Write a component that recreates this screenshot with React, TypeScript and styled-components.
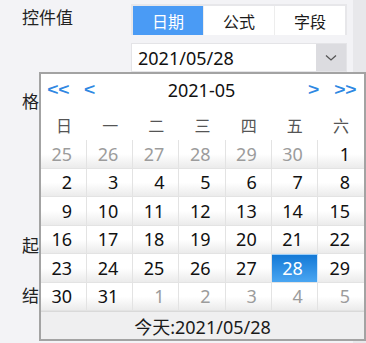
import React from "react";
import styled, { createGlobalStyle } from "styled-components";

const GlobalStyle = createGlobalStyle`
  html, body {
    margin: 0;
    padding: 0;
    background: #f3f3f6;
    font-family: "Noto Sans", "Noto Sans CJK SC", sans-serif;
  }
`;

const Page = styled.div`
  position: relative;
  display: flex;
  width: 366px;
  height: 343px;
  overflow: hidden;
`;

const Form = styled.div`
  flex: 1;
  display: flex;
  flex-direction: column;
  padding: 4px 6px 0 22px;
`;

const ScrollTrack = styled.div`
  width: 13px;
  background: #e8e8eb;
`;

const FieldRow = styled.div<{ $top?: number; $height: number }>`
  display: flex;
  align-items: center;
  margin-top: ${(p) => p.$top ?? 0}px;
  height: ${(p) => p.$height}px;
`;

const Label = styled.div`
  width: 109px;
  font-size: 17px;
  color: #222;
  align-self: flex-start;
  line-height: 22px;
  padding-top: 3px;
`;

const Segmented = styled.div`
  display: flex;
  width: 216px;
  height: 31px;
  box-sizing: border-box;
  border: 2px solid #e7e7ea;
  border-bottom: none;
  background: #fff;
`;

const SegButton = styled.div<{ $active?: boolean }>`
  flex: 1;
  display: flex;
  align-items: center;
  justify-content: center;
  font-size: 16px;
  color: ${(p) => (p.$active ? "#fff" : "#1a1a1a")};
  background: ${(p) => (p.$active ? "#4a9bf5" : "#fff")};
  & + & {
    border-left: 1px solid #ededed;
  }
`;

const DateInput = styled.div`
  display: flex;
  width: 216px;
  height: 29px;
  box-sizing: border-box;
  border: 1px solid #e4e4e7;
  background: #fff;
`;

const DateText = styled.div`
  flex: 1;
  display: flex;
  align-items: center;
  padding-left: 6px;
  font-size: 18px;
  color: #111;
`;

const DropButton = styled.div`
  width: 30px;
  display: flex;
  align-items: center;
  justify-content: center;
  background: #dcdce0;
`;

const Popup = styled.div`
  position: absolute;
  left: 39px;
  top: 72px;
  width: 327px;
  height: 269px;
  box-sizing: border-box;
  border: 2px solid #a3a3a3;
  background: #fff;
  display: flex;
  flex-direction: column;
`;

const Header = styled.div`
  display: flex;
  align-items: center;
  height: 32px;
  padding: 0 9px 0 8px;
`;

const NavBtn = styled.div<{ $gap?: number }>`
  color: #2f88e2;
  font-family: "Liberation Sans", sans-serif;
  font-weight: bold;
  font-size: 16px;
  letter-spacing: 0px;
  margin-left: ${(p) => p.$gap ?? 0}px;
  transform: scaleX(1.2);
`;

const Title = styled.div`
  flex: 1;
  text-align: center;
  font-size: 18px;
  color: #111;
`;

const WeekRow = styled.div`
  display: grid;
  grid-template-columns: repeat(7, 1fr);
  height: 34px;
  align-items: center;
`;

const WeekDay = styled.div`
  text-align: center;
  font-family: "Noto Sans CJK SC", sans-serif;
  font-size: 16px;
  color: #555;
  padding-top: 4px;
`;

const Grid = styled.div`
  display: grid;
  grid-template-columns: repeat(7, 1fr);
  grid-auto-rows: 28.5px;
`;

const Cell = styled.div<{ $muted?: boolean; $selected?: boolean }>`
  display: flex;
  align-items: center;
  justify-content: flex-end;
  padding-right: 14px;
  box-sizing: border-box;
  font-size: 18px;
  border-right: 1px solid #e3e3e3;
  border-bottom: 1px solid #e3e3e3;
  color: ${(p) => (p.$selected ? "#fff" : p.$muted ? "#9c9c9c" : "#111")};
  background: ${(p) =>
    p.$selected
      ? "linear-gradient(#1479d6, #4aa6f2)"
      : "linear-gradient(#ffffff 50%, #ebebeb)"};
  ${(p) => p.$selected && "border-top: 1px solid #9fd0fa; border-right-color: #cfe6fb;"}
  &:nth-child(7n) {
    border-right: none;
  }
`;

const Footer = styled.div`
  flex: 1;
  display: flex;
  align-items: center;
  justify-content: center;
  background: #efeff0;
  border-top: 1px solid #d9d9d9;
  font-size: 18px;
  color: #1a1a1a;
`;

const weekDays = ["日", "一", "二", "三", "四", "五", "六"];

type Day = { d: number; muted?: boolean };

const days: Day[] = [
  ...[25, 26, 27, 28, 29, 30].map((d) => ({ d, muted: true })),
  ...Array.from({ length: 31 }, (_, i) => ({ d: i + 1 })),
  ...[1, 2, 3, 4, 5].map((d) => ({ d, muted: true })),
];

const App: React.FC = () => {
  return (
    <Page>
      <GlobalStyle />
      <Form>
        <FieldRow $height={31}>
          <Label>控件值</Label>
          <Segmented>
            <SegButton $active>日期</SegButton>
            <SegButton>公式</SegButton>
            <SegButton>字段</SegButton>
          </Segmented>
        </FieldRow>
        <FieldRow $top={8} $height={29}>
          <Label />
          <DateInput>
            <DateText>2021/05/28</DateText>
            <DropButton>
              <svg width="12" height="8" viewBox="0 0 12 8">
                <path d="M1 1.5 L6 6 L11 1.5" fill="none" stroke="#555" strokeWidth="1.3" />
              </svg>
            </DropButton>
          </DateInput>
        </FieldRow>
        <FieldRow $top={16} $height={30}>
          <Label>格式</Label>
        </FieldRow>
        <FieldRow $top={114} $height={30}>
          <Label>起始值</Label>
        </FieldRow>
        <FieldRow $top={20} $height={30}>
          <Label>结束值</Label>
        </FieldRow>
      </Form>
      <ScrollTrack />

      <Popup>
        <Header>
          <NavBtn>&lt;&lt;</NavBtn>
          <NavBtn $gap={17}>&lt;</NavBtn>
          <Title>2021-05</Title>
          <NavBtn>&gt;</NavBtn>
          <NavBtn $gap={18}>&gt;&gt;</NavBtn>
        </Header>
        <WeekRow>
          {weekDays.map((w) => (
            <WeekDay key={w}>{w}</WeekDay>
          ))}
        </WeekRow>
        <Grid>
          {days.map((day, i) => (
            <Cell key={i} $muted={day.muted} $selected={!day.muted && day.d === 28}>
              {day.d}
            </Cell>
          ))}
        </Grid>
        <Footer>今天:2021/05/28</Footer>
      </Popup>
    </Page>
  );
};

export default App;
